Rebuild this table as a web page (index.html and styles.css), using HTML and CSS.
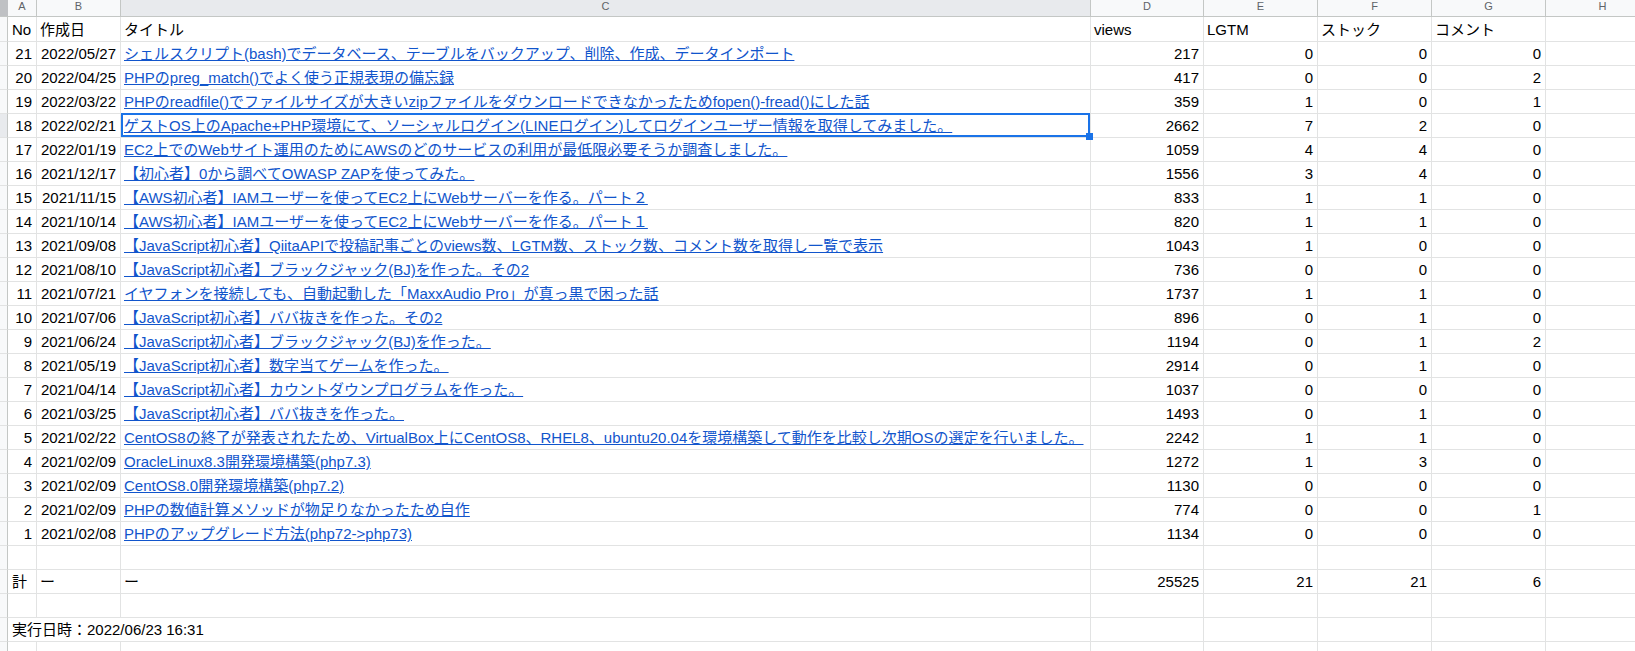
FILE: index.html
```html
<!DOCTYPE html>
<html lang="ja">
<head>
<meta charset="utf-8">
<title>Qiita記事一覧</title>
<link rel="stylesheet" href="styles.css">
</head>
<body>
<div class="sheet">
  <div class="row hdr">
    <div class="corner"></div>
    <div class="h"><span>A</span></div>
    <div class="h"><span>B</span></div>
    <div class="h sel"><span>C</span></div>
    <div class="h"><span>D</span></div>
    <div class="h"><span>E</span></div>
    <div class="h"><span>F</span></div>
    <div class="h"><span>G</span></div>
    <div class="h"><span>H</span></div>
  </div>
  <div class="row first">
    <div class="rh"></div>
    <div class="c colA">No</div><div class="c">作成日</div><div class="c">タイトル</div><div class="c">views</div><div class="c">LGTM</div><div class="c">ストック</div><div class="c">コメント</div><div class="c"></div>
  </div>
  <div class="row"><div class="rh"></div><div class="c r">21</div><div class="c r">2022/05/27</div><div class="c"><a href="#">シェルスクリプト(bash)でデータベース、テーブルをバックアップ、削除、作成、データインポート</a></div><div class="c r">217</div><div class="c r">0</div><div class="c r">0</div><div class="c r">0</div><div class="c"></div></div>
  <div class="row"><div class="rh"></div><div class="c r">20</div><div class="c r">2022/04/25</div><div class="c"><a href="#">PHPのpreg_match()でよく使う正規表現の備忘録</a></div><div class="c r">417</div><div class="c r">0</div><div class="c r">0</div><div class="c r">2</div><div class="c"></div></div>
  <div class="row"><div class="rh"></div><div class="c r">19</div><div class="c r">2022/03/22</div><div class="c"><a href="#">PHPのreadfile()でファイルサイズが大きいzipファイルをダウンロードできなかったためfopen()-fread()にした話</a></div><div class="c r">359</div><div class="c r">1</div><div class="c r">0</div><div class="c r">1</div><div class="c"></div></div>
  <div class="row"><div class="rh sel"></div><div class="c r">18</div><div class="c r">2022/02/21</div><div class="c cur"><a href="#">ゲストOS上のApache+PHP環境にて、ソーシャルログイン(LINEログイン)してログインユーザー情報を取得してみました。</a></div><div class="c r">2662</div><div class="c r">7</div><div class="c r">2</div><div class="c r">0</div><div class="c"></div></div>
  <div class="row"><div class="rh"></div><div class="c r">17</div><div class="c r">2022/01/19</div><div class="c"><a href="#">EC2上でのWebサイト運用のためにAWSのどのサービスの利用が最低限必要そうか調査しました。</a></div><div class="c r">1059</div><div class="c r">4</div><div class="c r">4</div><div class="c r">0</div><div class="c"></div></div>
  <div class="row"><div class="rh"></div><div class="c r">16</div><div class="c r">2021/12/17</div><div class="c"><a href="#">【初心者】0から調べてOWASP ZAPを使ってみた。</a></div><div class="c r">1556</div><div class="c r">3</div><div class="c r">4</div><div class="c r">0</div><div class="c"></div></div>
  <div class="row"><div class="rh"></div><div class="c r">15</div><div class="c r">2021/11/15</div><div class="c"><a href="#">【AWS初心者】IAMユーザーを使ってEC2上にWebサーバーを作る。パート２</a></div><div class="c r">833</div><div class="c r">1</div><div class="c r">1</div><div class="c r">0</div><div class="c"></div></div>
  <div class="row"><div class="rh"></div><div class="c r">14</div><div class="c r">2021/10/14</div><div class="c"><a href="#">【AWS初心者】IAMユーザーを使ってEC2上にWebサーバーを作る。パート１</a></div><div class="c r">820</div><div class="c r">1</div><div class="c r">1</div><div class="c r">0</div><div class="c"></div></div>
  <div class="row"><div class="rh"></div><div class="c r">13</div><div class="c r">2021/09/08</div><div class="c"><a href="#">【JavaScript初心者】QiitaAPIで投稿記事ごとのviews数、LGTM数、ストック数、コメント数を取得し一覧で表示</a></div><div class="c r">1043</div><div class="c r">1</div><div class="c r">0</div><div class="c r">0</div><div class="c"></div></div>
  <div class="row"><div class="rh"></div><div class="c r">12</div><div class="c r">2021/08/10</div><div class="c"><a href="#">【JavaScript初心者】ブラックジャック(BJ)を作った。その2</a></div><div class="c r">736</div><div class="c r">0</div><div class="c r">0</div><div class="c r">0</div><div class="c"></div></div>
  <div class="row"><div class="rh"></div><div class="c r">11</div><div class="c r">2021/07/21</div><div class="c"><a href="#">イヤフォンを接続しても、自動起動した「MaxxAudio Pro」が真っ黒で困った話</a></div><div class="c r">1737</div><div class="c r">1</div><div class="c r">1</div><div class="c r">0</div><div class="c"></div></div>
  <div class="row"><div class="rh"></div><div class="c r">10</div><div class="c r">2021/07/06</div><div class="c"><a href="#">【JavaScript初心者】ババ抜きを作った。その2</a></div><div class="c r">896</div><div class="c r">0</div><div class="c r">1</div><div class="c r">0</div><div class="c"></div></div>
  <div class="row"><div class="rh"></div><div class="c r">9</div><div class="c r">2021/06/24</div><div class="c"><a href="#">【JavaScript初心者】ブラックジャック(BJ)を作った。</a></div><div class="c r">1194</div><div class="c r">0</div><div class="c r">1</div><div class="c r">2</div><div class="c"></div></div>
  <div class="row"><div class="rh"></div><div class="c r">8</div><div class="c r">2021/05/19</div><div class="c"><a href="#">【JavaScript初心者】数字当てゲームを作った。</a></div><div class="c r">2914</div><div class="c r">0</div><div class="c r">1</div><div class="c r">0</div><div class="c"></div></div>
  <div class="row"><div class="rh"></div><div class="c r">7</div><div class="c r">2021/04/14</div><div class="c"><a href="#">【JavaScript初心者】カウントダウンプログラムを作った。</a></div><div class="c r">1037</div><div class="c r">0</div><div class="c r">0</div><div class="c r">0</div><div class="c"></div></div>
  <div class="row"><div class="rh"></div><div class="c r">6</div><div class="c r">2021/03/25</div><div class="c"><a href="#">【JavaScript初心者】ババ抜きを作った。</a></div><div class="c r">1493</div><div class="c r">0</div><div class="c r">1</div><div class="c r">0</div><div class="c"></div></div>
  <div class="row"><div class="rh"></div><div class="c r">5</div><div class="c r">2021/02/22</div><div class="c"><a href="#">CentOS8の終了が発表されたため、VirtualBox上にCentOS8、RHEL8、ubuntu20.04を環境構築して動作を比較し次期OSの選定を行いました。</a></div><div class="c r">2242</div><div class="c r">1</div><div class="c r">1</div><div class="c r">0</div><div class="c"></div></div>
  <div class="row"><div class="rh"></div><div class="c r">4</div><div class="c r">2021/02/09</div><div class="c"><a href="#">OracleLinux8.3開発環境構築(php7.3)</a></div><div class="c r">1272</div><div class="c r">1</div><div class="c r">3</div><div class="c r">0</div><div class="c"></div></div>
  <div class="row"><div class="rh"></div><div class="c r">3</div><div class="c r">2021/02/09</div><div class="c"><a href="#">CentOS8.0開発環境構築(php7.2)</a></div><div class="c r">1130</div><div class="c r">0</div><div class="c r">0</div><div class="c r">0</div><div class="c"></div></div>
  <div class="row"><div class="rh"></div><div class="c r">2</div><div class="c r">2021/02/09</div><div class="c"><a href="#">PHPの数値計算メソッドが物足りなかったため自作</a></div><div class="c r">774</div><div class="c r">0</div><div class="c r">0</div><div class="c r">1</div><div class="c"></div></div>
  <div class="row"><div class="rh"></div><div class="c r">1</div><div class="c r">2021/02/08</div><div class="c"><a href="#">PHPのアップグレード方法(php72-&gt;php73)</a></div><div class="c r">1134</div><div class="c r">0</div><div class="c r">0</div><div class="c r">0</div><div class="c"></div></div>
  <div class="row"><div class="rh"></div><div class="c"></div><div class="c"></div><div class="c"></div><div class="c"></div><div class="c"></div><div class="c"></div><div class="c"></div><div class="c"></div></div>
  <div class="row"><div class="rh"></div><div class="c colA">計</div><div class="c">ー</div><div class="c">ー</div><div class="c r">25525</div><div class="c r">21</div><div class="c r">21</div><div class="c r">6</div><div class="c"></div></div>
  <div class="row"><div class="rh"></div><div class="c"></div><div class="c"></div><div class="c"></div><div class="c"></div><div class="c"></div><div class="c"></div><div class="c"></div><div class="c"></div></div>
  <div class="row"><div class="rh"></div><div class="c colA span3">実行日時：2022/06/23 16:31</div><div class="c"></div><div class="c"></div><div class="c"></div><div class="c"></div><div class="c"></div></div>
  <div class="row"><div class="rh"></div><div class="c"></div><div class="c"></div><div class="c"></div><div class="c"></div><div class="c"></div><div class="c"></div><div class="c"></div><div class="c"></div></div>
</div>
</body>
</html>
```

FILE: styles.css
```css
html, body {
  margin: 0;
  padding: 0;
  overflow: hidden;
  background: #ffffff;
}

body {
  font-family: "Liberation Sans", Arial, "Noto Sans CJK JP", sans-serif;
  font-size: 15px;
  color: #000000;
}

.sheet {
  width: 1660px;
  display: flex;
  flex-direction: column;
}

.row {
  display: grid;
  grid-template-columns: 8px 29px 84px 970px 113px 114px 114px 114px 114px;
  height: 24px;
  flex: none;
}

.row.first {
  height: 25px;
}

.row.hdr {
  height: 17px;
}

.corner {
  background: #bfc1c4;
  border-bottom: 1px solid #c4c7c5;
}

.h {
  background: #f8f9fa;
  border-right: 1px solid #c4c7c5;
  border-bottom: 1px solid #c4c7c5;
  display: flex;
  justify-content: center;
  align-items: flex-start;
  font-size: 11px;
  line-height: 12px;
  color: #5f6368;
  overflow: hidden;
}

.h span {
  margin-top: 0;
}

.h.sel {
  background: #e8eaed;
}

.rh {
  background: #f8f9fa;
  border-right: 1px solid #c4c7c5;
  border-bottom: 1px solid #e2e3e3;
}

.rh.sel {
  background: #e8eaed;
}

.c {
  box-sizing: border-box;
  border-right: 1px solid #e2e3e3;
  border-bottom: 1px solid #e2e3e3;
  display: flex;
  align-items: flex-end;
  padding: 0 3px 3px 3px;
  line-height: 17px;
  white-space: nowrap;
  min-width: 0;
}

.c.colA {
  padding-left: 4px;
}

.c.r {
  justify-content: flex-end;
  padding-right: 4px;
}

.c.span3 {
  grid-column: span 3;
}

.c a {
  color: #1155cc;
  text-decoration: underline;
}

.c.cur {
  position: relative;
}

.c.cur::after {
  content: "";
  position: absolute;
  left: 0;
  right: 0;
  top: -1px;
  bottom: 0;
  border: 2px solid #1a73e8;
  pointer-events: none;
}

.c.cur::before {
  content: "";
  position: absolute;
  width: 7px;
  height: 7px;
  right: -3px;
  bottom: -3px;
  background: #1a73e8;
  z-index: 2;
}
```
